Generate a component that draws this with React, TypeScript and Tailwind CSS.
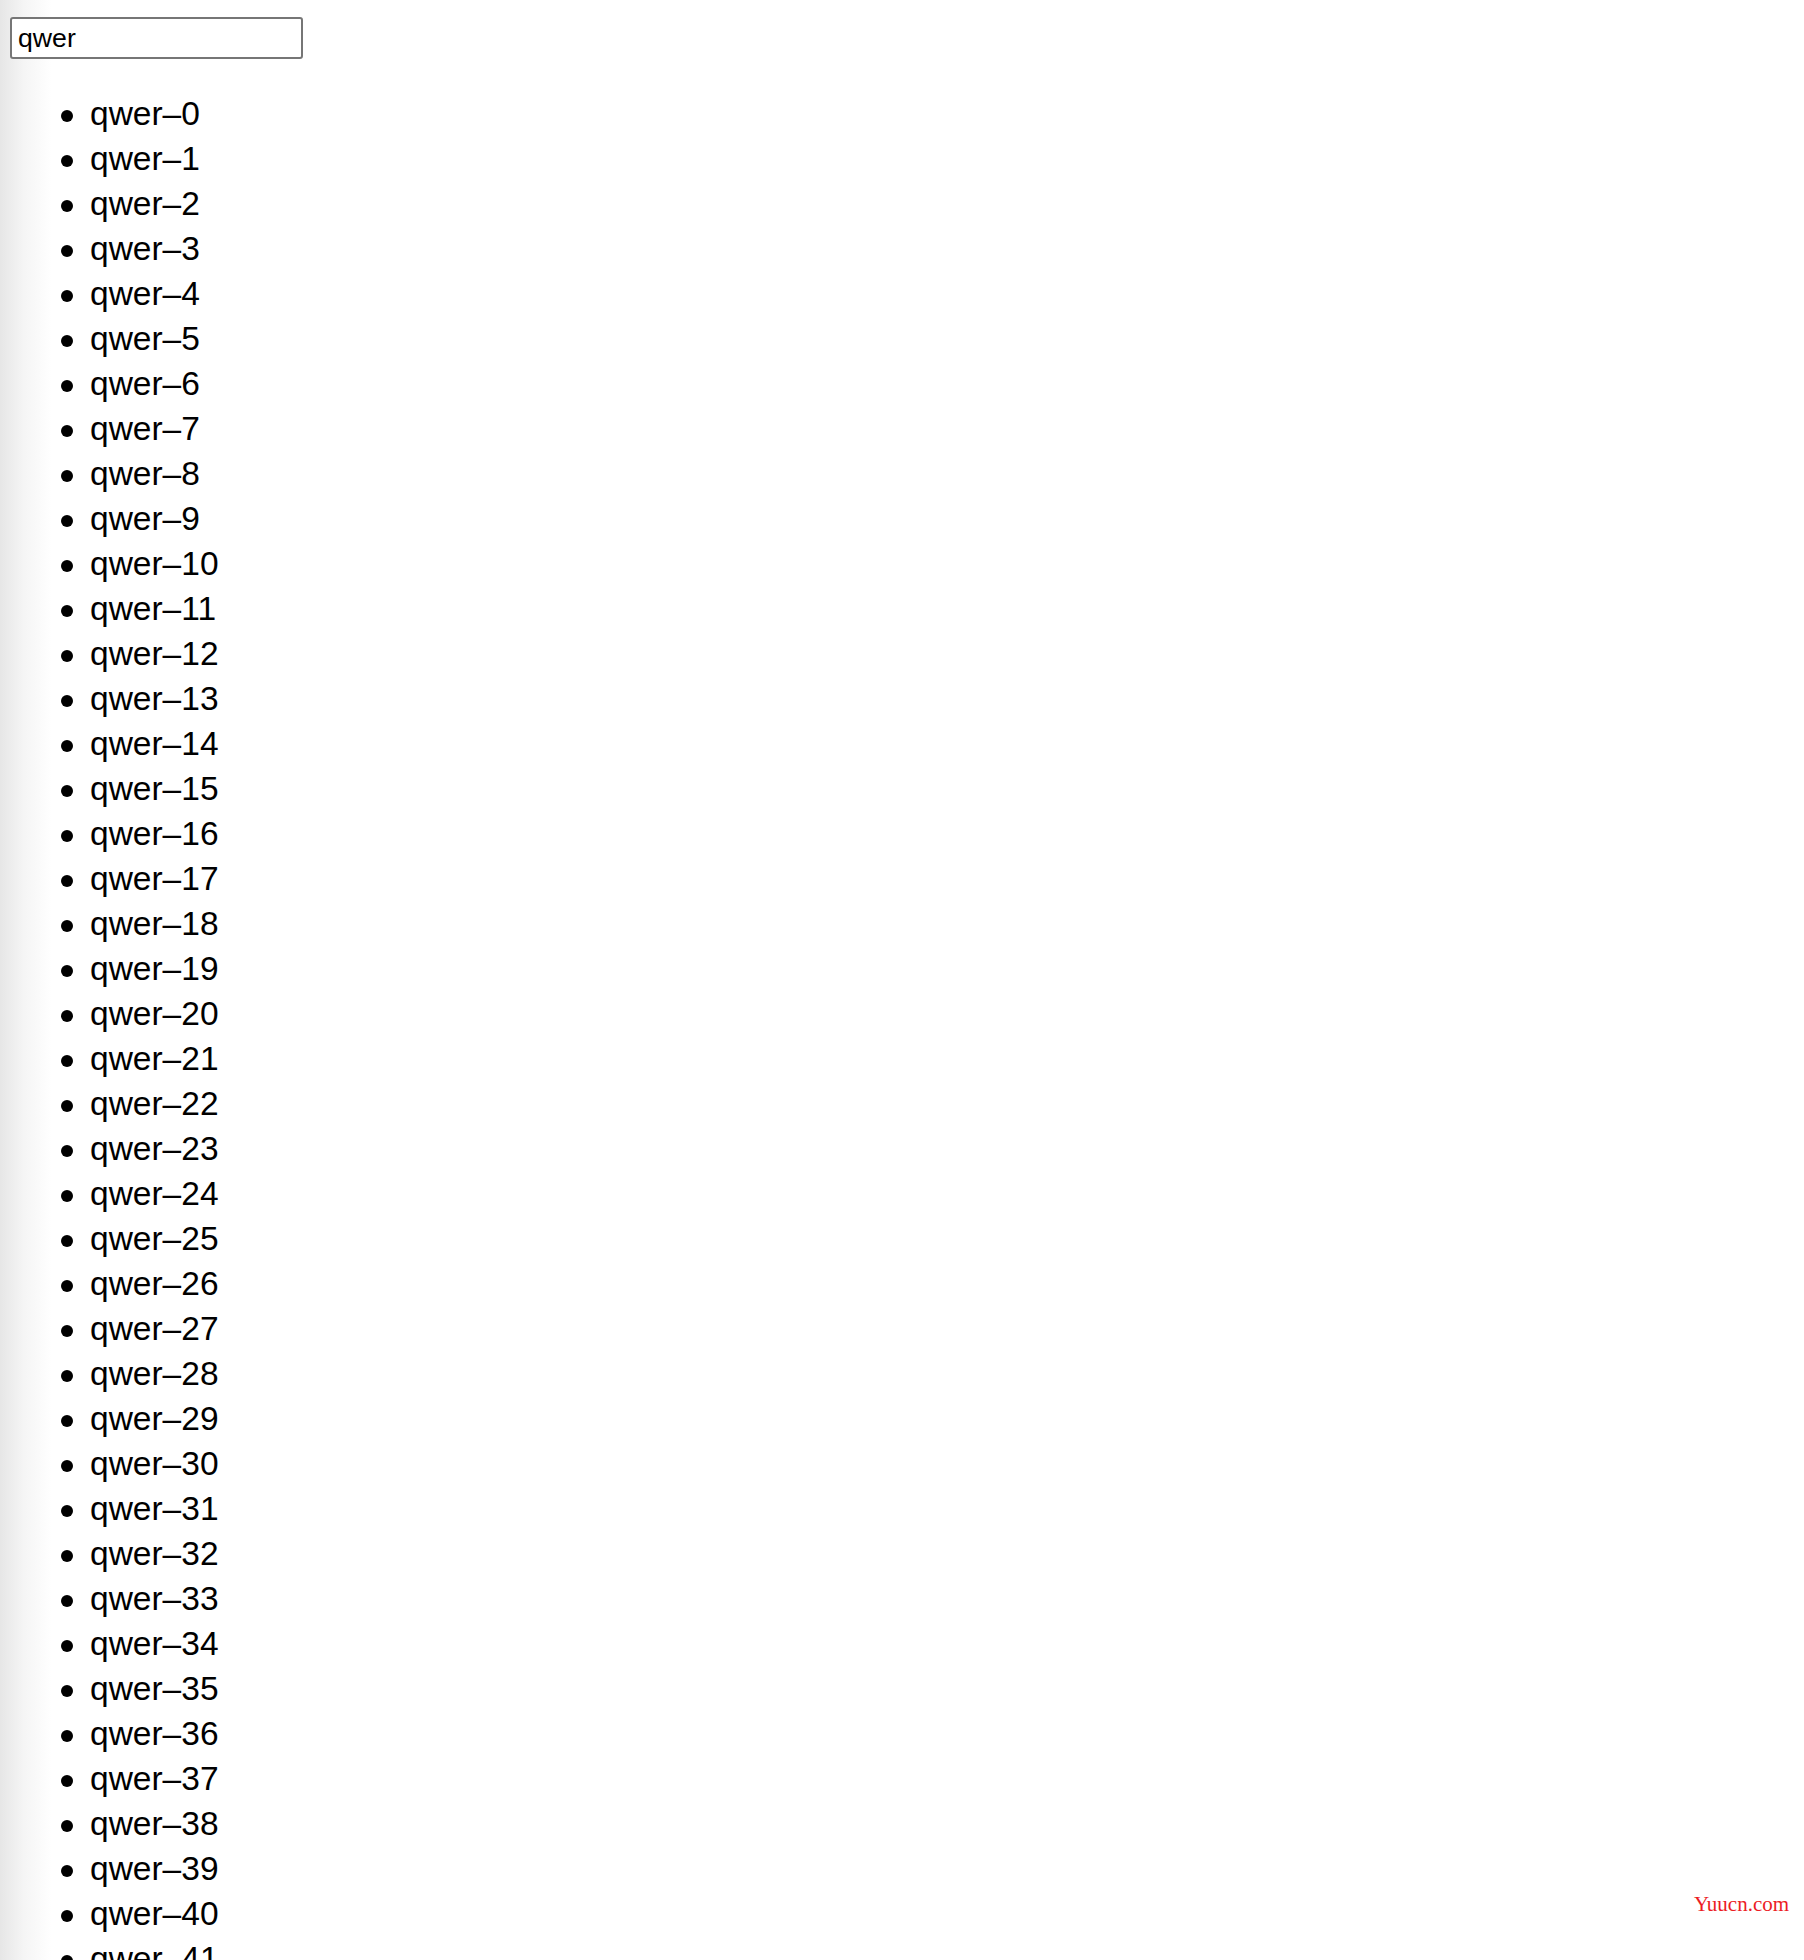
const items = Array.from({ length: 44 }, (_, i) => i);

export default function App() {
  return (
    <div className="relative h-[1960px] overflow-hidden bg-white bg-[linear-gradient(to_right,#e6e6e6,#f5f5f5_24px,#ffffff_52px)] font-['Liberation_Sans',Arial,sans-serif] text-black">
      {/* search box */}
      <input
        className="ml-[10px] mt-[17px] block h-[42px] w-[293px] rounded-[3px] border-2 border-[#767676] bg-white px-[6px] text-[26.67px] leading-[34px] text-black outline-none"
        defaultValue="qwer"
      />

      {/* filtered results */}
      <ul className="mt-[32px]">
        {items.map((i) => (
          <li key={i} className="flex h-[45px] items-center text-[33.5px] leading-[45px]">
            <span className="ml-[61px] mr-[17px] mt-[4px] size-[12px] shrink-0 rounded-full bg-black" />
            <span>qwer–{i}</span>
          </li>
        ))}
      </ul>

      {/* watermark */}
      <span className="absolute left-[1694px] top-[1893px] font-['Liberation_Serif',serif] text-[21px] leading-[22px] text-[#ec1c24]">
        Yuucn.com
      </span>
    </div>
  );
}
